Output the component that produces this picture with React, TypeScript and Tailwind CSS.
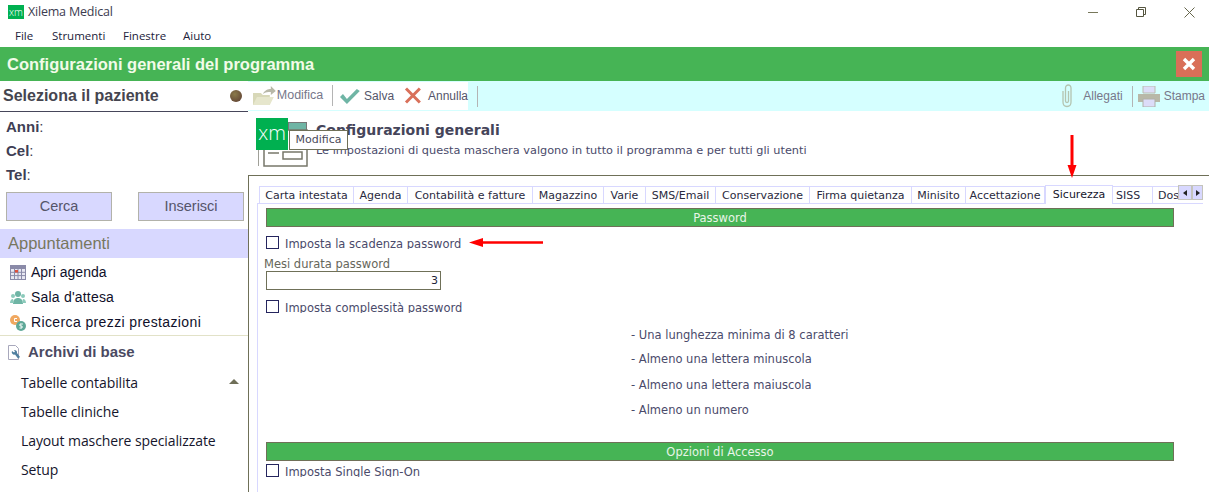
import React from "react";

const sans = "font-['Liberation_Sans',Arial,sans-serif]";
const ver = "font-['DejaVu_Sans',Verdana,sans-serif]";
const seg = "font-['Open_Sans','Noto_Sans',sans-serif]";

const tabs = [
  { t: "Carta intestata", w: "w-[95px] border-l" },
  { t: "Agenda", w: "w-[54px]" },
  { t: "Contabilità e fatture", w: "w-[125px]" },
  { t: "Magazzino", w: "w-[71px]" },
  { t: "Varie", w: "w-[42px]" },
  { t: "SMS/Email", w: "w-[70px]" },
  { t: "Conservazione", w: "w-[94px]" },
  { t: "Firma quietanza", w: "w-[102px]" },
  { t: "Minisito", w: "w-[54px]" },
  { t: "Accettazione", w: "w-[79px]" },
];

function Check({ label, className = "" }: { label: string; className?: string }) {
  return (
    <div className={`flex items-start ${className}`}>
      <div className="w-[13px] h-[13px] border border-[#25255e] bg-white shrink-0" />
      <div className="ml-[6px] mt-[2px] h-[11px] overflow-hidden text-[11.5px] leading-[13px] text-[#4a4a6a]">{label}</div>
    </div>
  );
}

function Band({ label, className = "" }: { label: string; className?: string }) {
  return (
    <div className={`ml-[8px] w-[908px] h-[19px] bg-[#46b455] border border-[#6f7058] text-center text-[11.5px] leading-[18px] text-[#e8f5e8] ${className}`}>{label}</div>
  );
}

function Sep() {
  return <div className="w-px h-[21px] bg-[#b4b4b4]" />;
}

export default function App() {
  return (
    <div className={`relative w-[1209px] h-[492px] overflow-hidden bg-white flex flex-col ${sans}`}>
      {/* title bar */}
      <div className={`h-[24px] flex items-center pl-[8px] shrink-0 ${seg}`}>
        <div className="w-[16px] h-[14px] bg-[#00b050] text-white text-[10px] leading-[14px] text-center font-light">xm</div>
        <span className="ml-[4px] mt-[1px] text-[12.5px] text-[#3c3c50] tracking-[-0.2px]">Xilema Medical</span>
        <div className="ml-auto flex items-center mr-[14px] gap-[38px]">
          <svg width="10" height="10" viewBox="0 0 10 10"><path d="M0 5.500h10" stroke="#77775a" fill="none" /></svg>
          <svg width="10" height="10" viewBox="0 0 10 10"><path d="M.5 2.500h7v7h-7zM2.500 2.500v-2h7v7h-2" stroke="#55553f" fill="none" /></svg>
          <svg width="11" height="11" viewBox="0 0 11 11"><path d="M.5.5l10 10M10.500.5l-10 10" stroke="#66664c" fill="none" /></svg>
        </div>
      </div>
      {/* menu */}
      <div className={`h-[23px] flex items-center text-[11.5px] text-[#22223a] shrink-0 pl-[15px] ${seg}`}>
        <span className="w-[37px]">File</span>
        <span className="w-[71px]">Strumenti</span>
        <span className="w-[60px]">Finestre</span>
        <span>Aiuto</span>
      </div>
      {/* green header */}
      <div className="h-[34px] bg-[#46b455] flex items-center justify-between pl-[7px] pr-[7px] shrink-0">
        <span className="text-[16.500px] font-bold text-[#f2fbe8]">Configurazioni generali del programma</span>
        <div className="w-[26px] h-[26px] bg-[#d96f58] flex items-center justify-center">
          <svg width="14" height="14" viewBox="0 0 14 14"><path d="M2 2l10 10M12 2L2 12" stroke="#fff" strokeWidth="3.400" fill="none" /></svg>
        </div>
      </div>
      {/* body */}
      <div className="flex flex-1 min-h-0">
        {/* left column */}
        <aside className="w-[248px] shrink-0 flex flex-col">
          <div className="h-[31px] border-b border-[#46465a] flex items-center justify-between pl-[3px] pr-[6px] shrink-0">
            <span className="text-[16px] font-bold text-[#45454f]">Seleziona il paziente</span>
            <div className="w-[12px] h-[12px] rounded-full bg-[radial-gradient(circle_at_40%_35%,#8a7a4a,#5a3a30)]" />
          </div>
          <div className="pl-[6px] pt-[3px] text-[15px] leading-[24px] text-[#3f3f55] font-bold">
            <div className="h-[24px]">Anni<span className="font-normal">:</span></div>
            <div className="h-[24px]">Cel<span className="font-normal">:</span></div>
            <div className="h-[24px]">Tel<span className="font-normal">:</span></div>
          </div>
          <div className="flex gap-[26px] pl-[6px] mt-[5px]">
            <button className="w-[106px] h-[29px] bg-[#d8d8ff] border border-[#b2b2aa] text-[14.500px] text-[#55556a]">Cerca</button>
            <button className="w-[106px] h-[29px] bg-[#d8d8ff] border border-[#b2b2aa] text-[14.500px] text-[#55556a]">Inserisci</button>
          </div>
          <div className="mt-[8px] h-[29px] bg-[#d8d8ff] pl-[8px] text-[16.500px] leading-[28px] text-[#77775e]">Appuntamenti</div>
          <div className="flex flex-col text-[14px] text-[#10102a] pl-[10px] pt-[2px] h-[78px] border-b border-[#e2e2c8]">
            <div className="h-[25px] flex items-center gap-[5px]">
              <svg width="16" height="15" viewBox="0 0 16 15"><rect width="16" height="15" fill="#8a8aa8" /><path d="M1 4h14v10H1z" fill="#e8e8f2" /><path d="M4.500 4v10M8 4v10M11.500 4v10M1 7.300h14M1 10.600h14" stroke="#8a8aa8" /><rect x="5" y="5" width="3" height="2.500" fill="#e0503a" /></svg>
              Apri agenda
            </div>
            <div className="h-[25px] flex items-center gap-[5px]">
              <svg width="16" height="15" viewBox="0 0 16 15"><circle cx="8" cy="4" r="3" fill="#6fb5a5" /><circle cx="3" cy="6" r="2" fill="#8ccabb" /><circle cx="13" cy="6" r="2" fill="#8ccabb" /><path d="M3 14c0-4 2-6 5-6s5 2 5 6z" fill="#6fb5a5" /><path d="M0 13c0-2 1-4 3-4l1 4zM16 13c0-2-1-4-3-4l-1 4z" fill="#8ccabb" /></svg>
              <span className="tracking-[0.2px]">Sala d'attesa</span>
            </div>
            <div className="h-[25px] flex items-center gap-[5px]">
              <svg width="16" height="16" viewBox="0 0 16 16"><circle cx="5" cy="5" r="5" fill="#f0a860" /><path d="M7 3.500H4.500v3H7" stroke="#fff" fill="none" /><circle cx="11" cy="11" r="5" fill="#5fa898" /><path d="M12.800 9h-2.800v2h2v2H9.500" stroke="#fff" fill="none" /></svg>
              <span className="tracking-[0.38px]">Ricerca prezzi prestazioni</span>
            </div>
          </div>
          <div className="h-[33px] flex items-center pl-[8px] gap-[6px] text-[15px] font-bold text-[#4a4a62]">
            <svg width="14" height="15" viewBox="0 0 14 15"><path d="M.5.5h7l3 3v11H.5z" fill="#fff" stroke="#a8a8bc" /><path d="M4 6a2.500 2.500 0 0 0 3 3.500l3 4 2-1.500-3-4A2.500 2.500 0 0 0 6 5l1 1.500-1 1z" fill="#4f7f9f" /></svg>
            Archivi di base
          </div>
          <div className={`relative pl-[21px] text-[14px] text-[#15152c] tracking-[-0.1px] ${seg}`}>
            <div className="h-[29px] leading-[27px]">Tabelle contabilita</div>
            <div className="h-[29px] leading-[27px]">Tabelle cliniche</div>
            <div className="h-[29px] leading-[27px]">Layout maschere specializzate</div>
            <div className="h-[29px] leading-[27px]">Setup</div>
            <div className="absolute right-[9px] top-[10px] w-0 h-0 border-l-[5px] border-r-[5px] border-b-[5px] border-l-transparent border-r-transparent border-b-[#6f6f58]" />
          </div>
        </aside>
        {/* right column */}
        <main className="flex-1 min-w-0 flex flex-col">
          {/* toolbar */}
          <div className="h-[30px] bg-[#d5ffff] flex items-center shrink-0 text-[12px] text-[#55556a]">
            <div className="w-[220px] h-[28px] mt-[-1px] bg-white flex items-center pl-[4px]">
              <svg width="24" height="20" viewBox="0 0 24 20"><path d="M1 7h8l2 2h7v10H1z" fill="#d8d8b8" /><path d="M1 19l4-8h17l-4 8z" fill="#e6e6cc" /><path d="M11 8c2-4 5-5 8-5V0l5 5-5 4V6c-3 0-5 0-8 2z" fill="#b8b8a8" /></svg>
              <span className="ml-[1px] text-[12.500px] text-[#77778a]">Modifica</span>
              <div className="ml-[9px]"><Sep /></div>
              <svg className="ml-[6px]" width="21" height="18" viewBox="0 0 21 18"><path d="M1 10l3-3 4 5L18 2l3 2L8 17z" fill="#6fb5a5" /></svg>
              <span className="ml-[4px]">Salva</span>
              <svg className="ml-[10px]" width="18" height="17" viewBox="0 0 18 17"><path d="M2 1.500l14 14M16 1.500l-14 14" stroke="#d9705a" strokeWidth="3" fill="none" /></svg>
              <span className="ml-[6px]">Annulla</span>
            </div>
            <div className="ml-[9px]"><Sep /></div>
            <div className="ml-auto flex items-center pr-[4px] text-[#77778a]">
              <svg width="14" height="24" viewBox="0 0 14 24"><path d="M3 7v11c0 6 8 6 8 0V4C11 0 5.500 0 5.500 4v13c0 2 3 2 3 0V7" stroke="#b4c4b0" strokeWidth="1.300" fill="none" /></svg>
              <span className="ml-[9px]">Allegati</span>
              <div className="ml-[9px]"><Sep /></div>
              <svg className="ml-[5px]" width="22" height="21" viewBox="0 0 22 21"><path d="M5 0h12v7H5z" fill="#dcdcf8" stroke="#bcbcb0" /><path d="M0 8h22v8H0z" fill="#b8b8a8" /><path d="M5 13h12v8H5z" fill="#dcdcf8" stroke="#b0b0a8" /></svg>
              <span className="ml-[4px]">Stampa</span>
            </div>
          </div>
          {/* form header */}
          <div className="h-[64px] shrink-0 flex">
            <svg className="ml-[10px] mt-[10px]" width="50" height="46" viewBox="0 0 50 46">
              <rect x="30.500" y="1.500" width="18" height="8" fill="#6fb5a5" stroke="#777" />
              <rect x="6" y="9" width="43" height="36" fill="#fff" stroke="#77776a" strokeWidth="1.500" />
              <path d="M10 32h11" stroke="#77776a" strokeWidth="1.500" />
              <path d="M.5 20v25" stroke="#a0a098" />
              <rect x="25" y="31" width="19" height="7" fill="#fff" stroke="#77776a" strokeWidth="1.500" />
            </svg>
            <div className="ml-[8px]">
              <div className={`mt-[9px] text-[14px] font-bold leading-[20px] text-[#45455a] ${ver}`}>Configurazioni generali</div>
              <div className={`mt-[4px] text-[11.300px] leading-[14px] text-[#4a4a6a] ${ver}`}>Le impostazioni di questa maschera valgono in tutto il programma e per tutti gli utenti</div>
            </div>
          </div>
          {/* panel */}
          <div className={`flex-1 min-h-0 border-t border-l border-[#6f7058] pl-[8px] pt-[8px] pr-[6px] overflow-hidden ${ver}`}>
            <div className="relative h-[20px] w-[946px] overflow-hidden">
              <div className="flex items-end h-[20px] pl-[2px] w-[1000px] text-[11px]">
                {tabs.map(({ t, w }) => (
                  <div key={t} className={`${w} h-[18px] text-center leading-[17px] text-[#2a2a40] border-t border-r border-[#d8d8ff] shrink-0`}>{t}</div>
                ))}
                <div className="w-[68px] h-[20px] text-center leading-[17px] text-[#15152c] bg-white border-t border-l border-r border-[#d8d8ff] shrink-0 mb-[-1px]">Sicurezza</div>
                <div className="w-[40px] h-[18px] pl-[3px] leading-[17px] text-[#2a2a40] border-t border-r border-[#d8d8ff] shrink-0">SISS</div>
                <div className="w-[70px] h-[18px] pl-[5px] leading-[17px] text-[#2a2a40] border-t border-[#d8d8ff] shrink-0">Dosimetria</div>
              </div>
              <div className="absolute right-0 top-0 flex h-[17px] bg-white">
                <div className="w-[14px] h-[15px] mt-[1px] bg-[#d8d8ff] border border-[#c4c4bc] flex items-center justify-center"><div className="w-0 h-0 border-t-[3px] border-b-[3px] border-r-[4px] border-t-transparent border-b-transparent border-r-[#222]" /></div>
                <div className="w-[11px] h-[15px] mt-[1px] bg-[#d8d8ff] border border-[#c4c4bc] flex items-center justify-center"><div className="w-0 h-0 border-t-[3px] border-b-[3px] border-l-[4px] border-t-transparent border-b-transparent border-l-[#222]" /></div>
              </div>
            </div>
            <div className="border-t border-l border-[#d8d8ff] h-[300px] pt-[4px] -mt-[1px] w-[946px]">
              <Band label="Password" />
              <Check label="Imposta la scadenza password" className="ml-[8px] mt-[9px]" />
              <div className="ml-[6px] mt-[8px] h-[14px] text-[11.500px] leading-[14px] text-[#66665a]">Mesi durata password</div>
              <div className="ml-[8px] w-[175px] h-[19px] border border-[#6f7058] text-right text-[11px] leading-[18px] pr-[2px] text-[#22223a]">3</div>
              <Check label="Imposta complessità password" className="ml-[8px] mt-[10px]" />
              <div className="ml-[373px] text-[11.500px] text-[#4a4a6a] mt-[15px]">
                <div className="h-[24px] leading-[14px]">- Una lunghezza minima di 8 caratteri</div>
                <div className="h-[26px] leading-[14px]">- Almeno una lettera minuscola</div>
                <div className="h-[25px] leading-[14px]">- Almeno una lettera maiuscola</div>
                <div className="h-[14px] leading-[14px]">- Almeno un numero</div>
              </div>
              <Band label="Opzioni di Accesso" className="mt-[25px]" />
              <Check label="Imposta Single Sign-On" className="ml-[8px] mt-[3px]" />
            </div>
          </div>
        </main>
      </div>
      {/* overlays */}
      <div className={`absolute left-[256px] top-[118px] w-[32px] h-[32px] bg-[#00b050] text-white text-[20px] leading-[30px] text-center font-light ${seg}`}>xm</div>
      <div className={`absolute left-[289px] top-[130px] w-[59px] h-[20px] bg-white border border-[#6f7058] text-[11px] leading-[18px] text-center text-[#4a4a5a] ${ver}`}>Modifica</div>
      <svg className="absolute left-[1066px] top-[135px]" width="12" height="44" viewBox="0 0 12 44"><path d="M6 0v32" stroke="#ff0000" strokeWidth="3" /><path d="M1.500 30h9L6 43z" fill="#ff0000" /></svg>
      <svg className="absolute left-[469px] top-[237px]" width="75" height="12" viewBox="0 0 75 12"><path d="M12 5.500h62" stroke="#ff0000" strokeWidth="2.500" /><path d="M14 1v9L0 5.500z" fill="#ff0000" /></svg>
    </div>
  );
}
